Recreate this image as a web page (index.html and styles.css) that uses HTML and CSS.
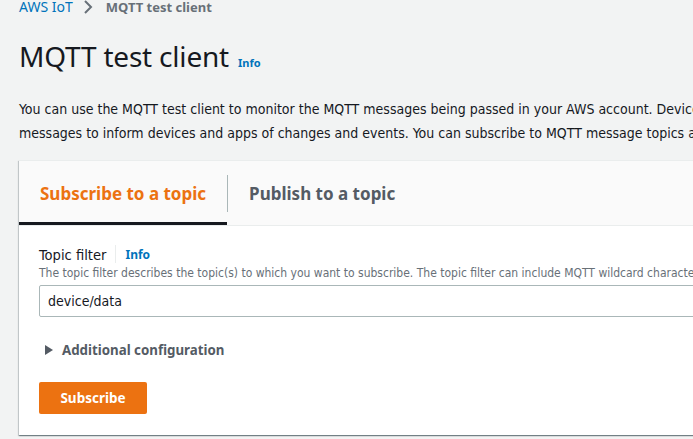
FILE: index.html
```html
<!DOCTYPE html>
<html><head><meta charset="utf-8"><link rel="stylesheet" href="styles.css"></head>
<body>
<div class="page">
  <nav class="crumbs">
    <a class="crumb-link">AWS IoT</a>
    <svg class="chev" width="10" height="14" viewBox="0 0 10 14"><path d="M2 1 L8 7 L2 13" fill="none" stroke="#687078" stroke-width="2"/></svg>
    <span class="crumb-cur">MQTT test client</span>
  </nav>
  <div class="title-row">
    <h1 class="title">MQTT test client</h1>
    <a class="info">Info</a>
  </div>
  <p class="intro">You can use the MQTT test client to monitor the MQTT messages being passed in your AWS account. Devices publish MQTT<br>messages to inform devices and apps of changes and events. You can subscribe to MQTT message topics and publish MQTT messages to topics by using the MQTT test client.</p>
  <div class="card">
    <div class="tabs">
      <div class="tab active">Subscribe to a topic</div>
      <div class="tab-sep"></div>
      <div class="tab">Publish to a topic</div>
    </div>
    <div class="card-body">
      <div class="label-row">
        <span class="label">Topic filter</span>
        <span class="label-sep"></span>
        <a class="info info-sm">Info</a>
      </div>
      <div class="desc">The topic filter describes the topic(s) to which you want to subscribe. The topic filter can include MQTT wildcard characters.</div>
      <div class="input">device/data</div>
      <div class="expand">
        <svg class="caret" width="8" height="10" viewBox="0 0 8 10"><path d="M0 0 L8 5 L0 10 Z" fill="#545b64"/></svg>
        <span>Additional configuration</span>
      </div>
      <div class="btn">Subscribe</div>
    </div>
  </div>
</div>
</body></html>
```
FILE: styles.css
```css
html,body{margin:0;height:100%;}
body{background:#f2f3f3;overflow:hidden;color:#16191f;font-family:"Noto Sans",sans-serif;}
.page{padding-left:19px;width:900px;}
.crumbs{display:flex;align-items:center;height:14px;line-height:14px;}
.crumb-link{color:#0073bb;font-size:14px;}
.chev{margin:0 13px 0 10px;}
.crumb-cur{color:#687078;font-weight:700;font-size:13px;}
.title-row{display:flex;align-items:baseline;margin-top:24px;height:36px;}
.title{margin:0;font-size:28px;font-weight:400;line-height:36px;letter-spacing:-0.2px;}
.info{color:#0073bb;font-weight:700;font-size:11px;margin-left:9px;}
.intro{margin:23px 0 0;white-space:nowrap;font-family:"DejaVu Sans Condensed",sans-serif;font-size:14px;line-height:24px;color:#16191f;}
.card{margin-top:15px;background:#fff;border-top:1px solid #eaeded;box-shadow:0 1px 1px 0 rgba(0,28,36,.35),1px 1px 1px 0 rgba(0,28,36,.15),-1px 1px 1px 0 rgba(0,28,36,.15);width:860px;}
.tabs{display:flex;align-items:center;height:64px;background:#fafafa;border-bottom:1px solid #eaeded;}
.tab{height:64px;box-sizing:border-box;display:flex;align-items:center;padding:0 20px 0 21px;font-size:17px;font-weight:700;color:#545b64;}
.tab.active{color:#ec7211;border-bottom:3px solid #16191f;padding-top:3px;padding-right:21px;}
.tab-sep{width:1px;height:37px;background:#aab7b8;}
.card-body{padding:18px 20px 21px;}
.label-row{display:flex;align-items:center;height:20px;}
.label{font-family:"DejaVu Sans Condensed",sans-serif;font-size:14.6px;}
.label-sep{width:1px;height:18px;background:#eaeded;margin:0 9px 0 9px;}
.info-sm{font-size:12px;margin-left:0;}
.desc{font-family:"DejaVu Sans Condensed",sans-serif;font-size:12px;color:#687078;line-height:16px;margin-top:1px;white-space:nowrap;}
.input{margin-top:4px;height:32px;box-sizing:border-box;border:1px solid #aab7b8;border-radius:2px;padding:0 8px;display:flex;align-items:center;font-family:"DejaVu Sans Condensed",sans-serif;font-size:14px;color:#16191f;}
.expand{display:flex;align-items:center;margin-top:23px;height:20px;padding-left:6px;font-weight:700;font-size:13.3px;color:#545b64;}
.caret{margin-right:9px;}
.btn{margin-top:22px;width:108px;height:32px;box-sizing:border-box;background:#ec7211;border-radius:2px;color:#fff;font-weight:700;font-size:13.5px;display:flex;align-items:center;justify-content:center;}
```
